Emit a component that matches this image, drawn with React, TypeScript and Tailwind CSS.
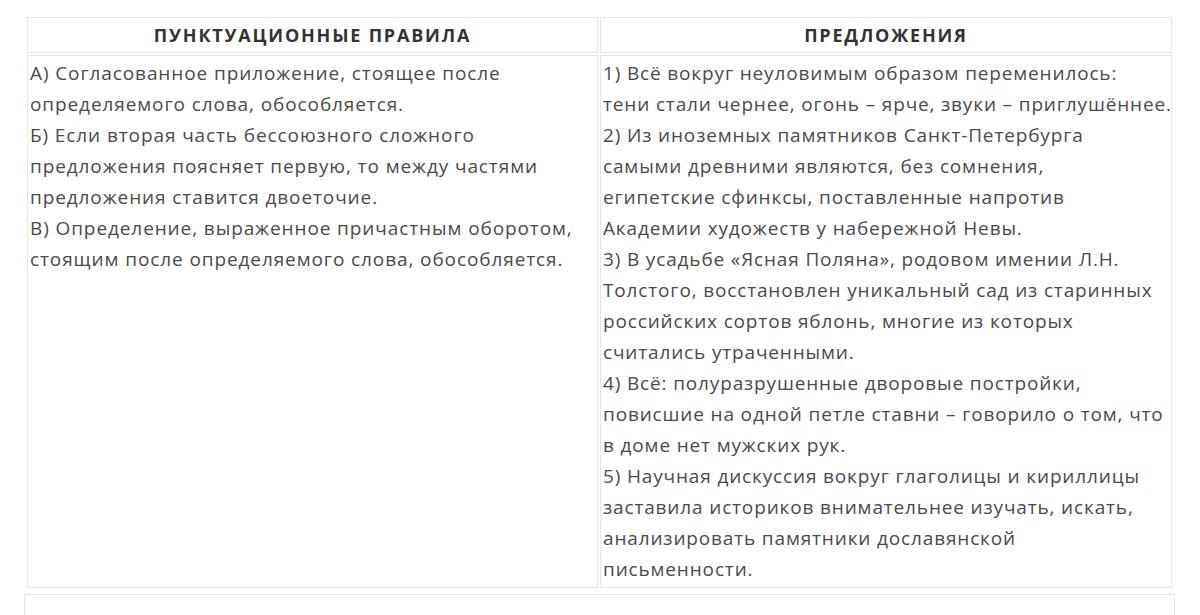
const rules = [
  'А) Согласованное приложение, стоящее после',
  'определяемого слова, обособляется.',
  'Б) Если вторая часть бессоюзного сложного',
  'предложения поясняет первую, то между частями',
  'предложения ставится двоеточие.',
  'В) Определение, выраженное причастным оборотом,',
  'стоящим после определяемого слова, обособляется.',
];

const sentences = [
  '1) Всё вокруг неуловимым образом переменилось:',
  'тени стали чернее, огонь – ярче, звуки – приглушённее.',
  '2) Из иноземных памятников Санкт-Петербурга',
  'самыми древними являются, без сомнения,',
  'египетские сфинксы, поставленные напротив',
  'Академии художеств у набережной Невы.',
  '3) В усадьбе «Ясная Поляна», родовом имении Л.Н.',
  'Толстого, восстановлен уникальный сад из старинных',
  'российских сортов яблонь, многие из которых',
  'считались утраченными.',
  '4) Всё: полуразрушенные дворовые постройки,',
  'повисшие на одной петле ставни – говорило о том, что',
  'в доме нет мужских рук.',
  '5) Научная дискуссия вокруг глаголицы и кириллицы',
  'заставила историков внимательнее изучать, искать,',
  'анализировать памятники дославянской',
  'письменности.',
];

function Lines({ items }: { items: string[] }) {
  return (
    <>
      {items.map((l, i) => (
        <div key={i} className="whitespace-nowrap">{l}</div>
      ))}
    </>
  );
}

export default function App() {
  return (
    <div className="w-[1200px] h-[615px] overflow-hidden bg-white font-['Open_Sans',sans-serif]">
      <div className="pt-[15px] pl-[25px]">
        <table className="border-separate border-spacing-0.5 table-fixed w-[1149px]">
          <thead>
            <tr>
              <th className="w-[571px] h-[36px] border border-[#e6e6e6] text-[18px] font-bold text-[#333] text-center tracking-[1.8px]">
                ПУНКТУАЦИОННЫЕ ПРАВИЛА
              </th>
              <th className="h-[36px] border border-[#e6e6e6] text-[18px] font-bold text-[#333] text-center tracking-[1.8px]">
                ПРЕДЛОЖЕНИЯ
              </th>
            </tr>
          </thead>
          <tbody>
            <tr>
              <td className="align-top border border-[#e6e6e6] px-[2px] pt-[2px] text-[19px] leading-[31px] text-[#4a4a4a] tracking-[0.9px]">
                <Lines items={rules} />
              </td>
              <td className="align-top border border-[#e6e6e6] px-[2px] pt-[2px] pb-[2px] text-[19px] leading-[31px] text-[#4a4a4a] tracking-[0.85px]">
                <Lines items={sentences} />
              </td>
            </tr>
          </tbody>
        </table>
      </div>
      <div className="ml-[24px] mt-[4px] w-[1151px] h-[40px] border border-[#dfe4ea] bg-white" />
    </div>
  );
}
